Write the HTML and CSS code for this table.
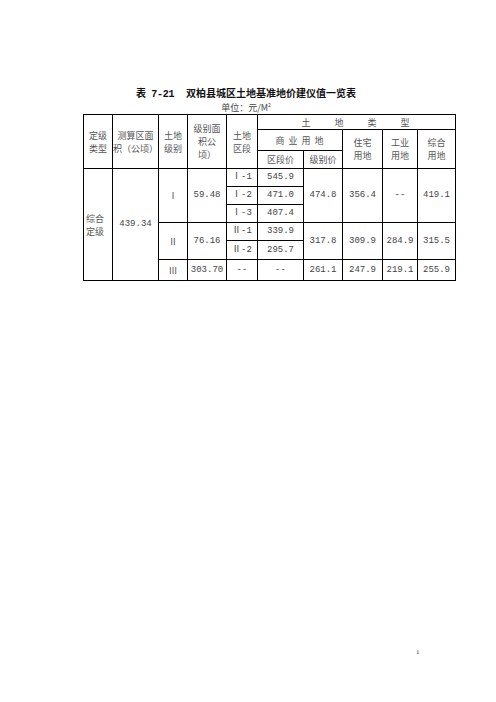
FILE: index.html
```html
<!DOCTYPE html>
<html>
<head>
<meta charset="utf-8">
<link rel="stylesheet" href="styles.css">
</head>
<body>
<div class="page">
  <div class="title"><span class="tno">表 7-21</span>双柏县城区土地基准地价建仪值一览表</div>
  <div class="unit">单位：元/M<sup>2</sup></div>
  <table class="grid">
    <colgroup>
      <col class="c1"><col class="c2"><col class="c3"><col class="c4"><col class="c5">
      <col class="c6"><col class="c7"><col class="c8"><col class="c9"><col class="c10">
    </colgroup>
    <tr class="r1">
      <td rowspan="3">定级<br>类型</td>
      <td rowspan="3">测算区面<br>积（公顷）</td>
      <td rowspan="3">土地<br>级别</td>
      <td rowspan="3">级别面<br>积公<br>顷）</td>
      <td rowspan="3">土地<br>区段</td>
      <td colspan="5" class="spread">土　　地　　类　　型</td>
    </tr>
    <tr class="r2">
      <td colspan="2" class="spread2">商 业 用 地</td>
      <td rowspan="2">住宅<br>用地</td>
      <td rowspan="2">工业<br>用地</td>
      <td rowspan="2">综合<br>用地</td>
    </tr>
    <tr class="r3">
      <td>区段价</td>
      <td>级别价</td>
    </tr>
    <tr class="rb">
      <td rowspan="6" class="left">综合<br>定级</td>
      <td rowspan="6" class="num">439.34</td>
      <td rowspan="3">Ⅰ</td>
      <td rowspan="3" class="num">59.48</td>
      <td class="num">Ⅰ-1</td>
      <td class="num">545.9</td>
      <td rowspan="3" class="num">474.8</td>
      <td rowspan="3" class="num">356.4</td>
      <td rowspan="3" class="num">--</td>
      <td rowspan="3" class="num">419.1</td>
    </tr>
    <tr class="rb">
      <td class="num">Ⅰ-2</td>
      <td class="num">471.0</td>
    </tr>
    <tr class="rb">
      <td class="num">Ⅰ-3</td>
      <td class="num">407.4</td>
    </tr>
    <tr class="rb">
      <td rowspan="2">Ⅱ</td>
      <td rowspan="2" class="num">76.16</td>
      <td class="num">Ⅱ-1</td>
      <td class="num">339.9</td>
      <td rowspan="2" class="num">317.8</td>
      <td rowspan="2" class="num">309.9</td>
      <td rowspan="2" class="num">284.9</td>
      <td rowspan="2" class="num">315.5</td>
    </tr>
    <tr class="rb rb5">
      <td class="num">Ⅱ-2</td>
      <td class="num">295.7</td>
    </tr>
    <tr class="rlast">
      <td>Ⅲ</td>
      <td class="num">303.70</td>
      <td class="num">--</td>
      <td class="num">--</td>
      <td class="num">261.1</td>
      <td class="num">247.9</td>
      <td class="num">219.1</td>
      <td class="num">255.9</td>
    </tr>
  </table>
  <div class="pageno">1</div>
</div>
</body>
</html>
```

FILE: styles.css
```css
html, body {
  margin: 0;
  padding: 0;
  background: #fff;
}
.page {
  width: 496px;
  height: 702px;
  box-sizing: border-box;
  padding-top: 87px;
  display: flex;
  flex-direction: column;
  font-family: "Noto Sans CJK SC", "DejaVu Sans", sans-serif;
  color: #555;
}
.title {
  width: 492px;
  text-align: center;
  font-size: 10px;
  line-height: 12px;
  font-weight: bold;
  color: #111;
}
.tno {
  font-family: "Liberation Mono", "Noto Sans CJK SC", monospace;
  margin-right: 12px;
  letter-spacing: -0.3px;
}
.unit {
  width: 492px;
  text-align: center;
  font-size: 9px;
  line-height: 13px;
  color: #444;
}
.unit sup {
  font-size: 5px;
  line-height: 0;
}
.grid {
  margin-left: 83px;
  border-collapse: collapse;
  table-layout: fixed;
  width: 372px;
  font-size: 9px;
  line-height: 13px;
}
.grid td {
  border: 1px solid #000;
  padding: 0;
  text-align: center;
  vertical-align: middle;
  overflow: hidden;
  white-space: nowrap;
}
.c1 { width: 29px; }
.c2 { width: 46px; }
.c3 { width: 29px; }
.c4 { width: 39px; }
.c5 { width: 31px; }
.c6 { width: 46px; }
.c7 { width: 39px; }
.c8 { width: 40px; }
.c9 { width: 35px; }
.c10 { width: 38px; }
.r1 td { height: 14px; }
.r2 td { height: 20px; }
.r3 td { height: 17px; }
.rb td { height: 17px; }
.rb5 td { height: 18px; }
.rlast td { height: 20px; }
.grid td.left { text-align: left; padding-left: 2px; }
.num {
  font-family: "Liberation Mono", "Noto Sans CJK SC", monospace;
  font-size: 9px;
  color: #444;
}
.spread { letter-spacing: 2px; }
.spread2 { letter-spacing: 1px; }
.pageno {
  margin-top: auto;
  margin-bottom: 46px;
  margin-left: 416px;
  font-family: "Liberation Serif", serif;
  font-size: 7px;
  line-height: 8px;
  color: #333;
}
```
